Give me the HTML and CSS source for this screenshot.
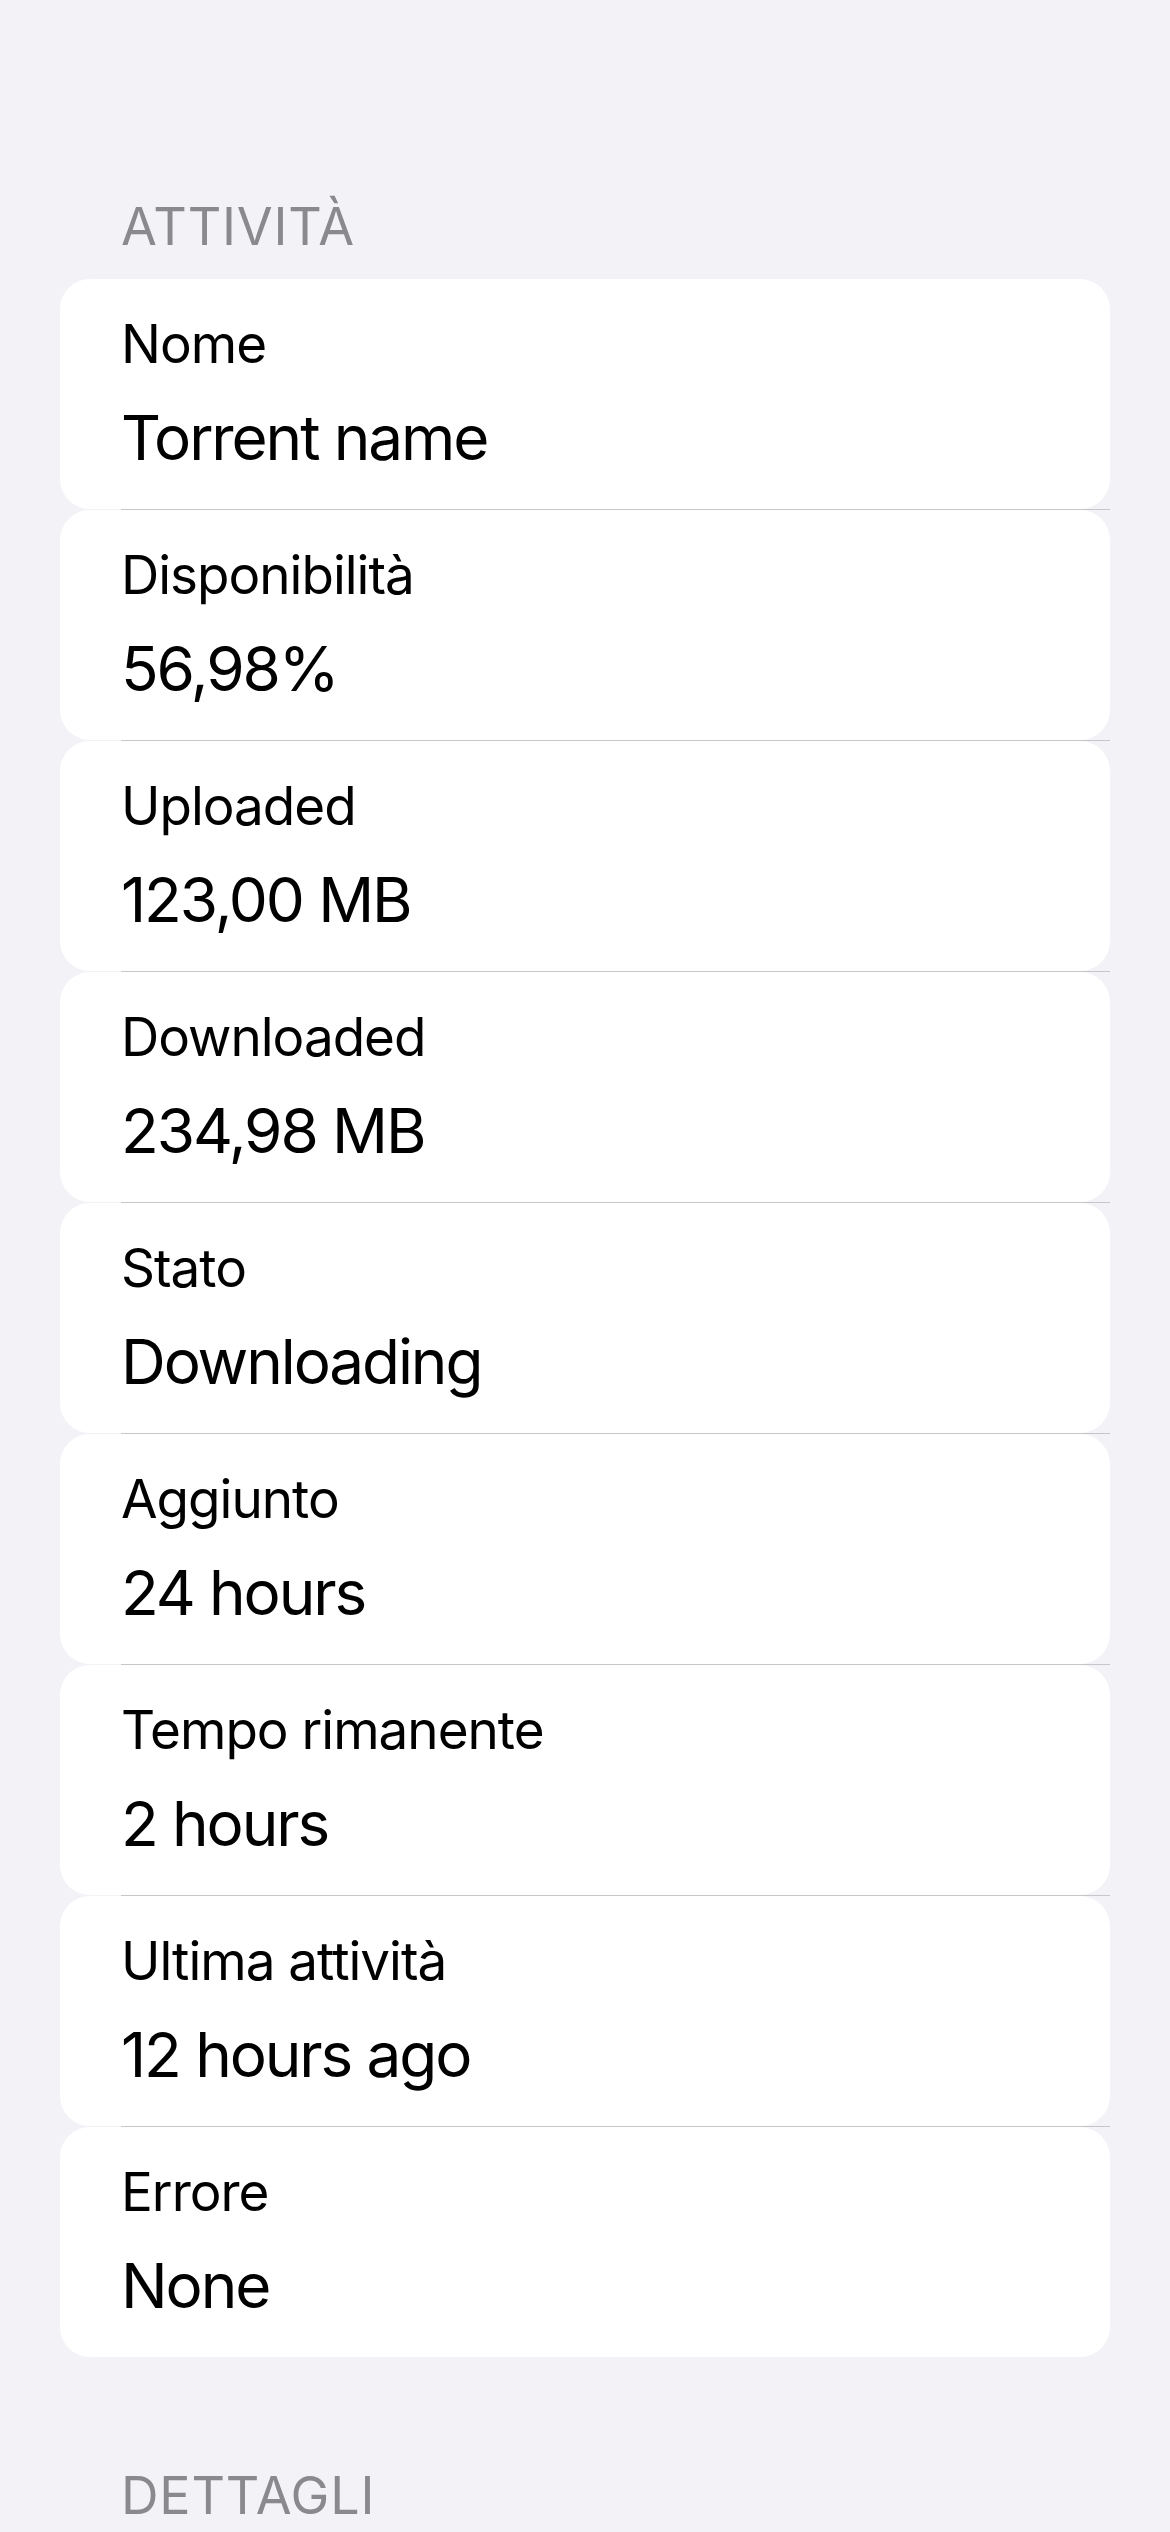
FILE: index.html
```html
<!DOCTYPE html>
<html lang="it">
<head>
<meta charset="utf-8">
<title>Attività</title>
<link rel="stylesheet" href="styles.css">
</head>
<body>
<main class="page">
  <h2 class="section-header">ATTIVITÀ</h2>
  <section class="list">
    <div class="row"><div class="label">Nome</div><div class="value">Torrent name</div></div>
    <div class="sep"></div>
    <div class="row"><div class="label">Disponibilità</div><div class="value">56,98%</div></div>
    <div class="sep"></div>
    <div class="row"><div class="label">Uploaded</div><div class="value">123,00 MB</div></div>
    <div class="sep"></div>
    <div class="row"><div class="label">Downloaded</div><div class="value">234,98 MB</div></div>
    <div class="sep"></div>
    <div class="row"><div class="label">Stato</div><div class="value">Downloading</div></div>
    <div class="sep"></div>
    <div class="row"><div class="label">Aggiunto</div><div class="value">24 hours</div></div>
    <div class="sep"></div>
    <div class="row"><div class="label">Tempo rimanente</div><div class="value">2 hours</div></div>
    <div class="sep"></div>
    <div class="row"><div class="label">Ultima attività</div><div class="value">12 hours ago</div></div>
    <div class="sep"></div>
    <div class="row"><div class="label">Errore</div><div class="value">None</div></div>
  </section>
  <h2 class="section-header section-header--next">DETTAGLI</h2>
</main>
</body>
</html>
```
FILE: styles.css
```css
html, body {
  margin: 0;
  padding: 0;
  background: #f2f2f7;
}

body {
  font-family: "Inter", "Roboto", "Liberation Sans", sans-serif;
  color: #000;
  -webkit-font-smoothing: antialiased;
}

.page {
  padding: 199px 60px 0 60px;
}

.section-header {
  margin: 0 0 24px 61px;
  font-size: 52px;
  line-height: 56px;
  font-weight: 400;
  color: #8a8a8e;
  letter-spacing: 0.8px;
}

.section-header--next {
  margin-top: 111px;
}

.list {
  display: flex;
  flex-direction: column;
}

.row {
  background: #fff;
  border-radius: 30px;
  height: 230px;
  box-sizing: border-box;
  padding: 33px 24px 0 61px;
}

.sep {
  height: 1px;
  margin-left: 61px;
  background: #c6c6c8;
}

.label {
  font-size: 53px;
  line-height: 64px;
  letter-spacing: -1px;
}

.value {
  margin-top: 24px;
  font-size: 62px;
  line-height: 76px;
  letter-spacing: -2.1px;
}
```
